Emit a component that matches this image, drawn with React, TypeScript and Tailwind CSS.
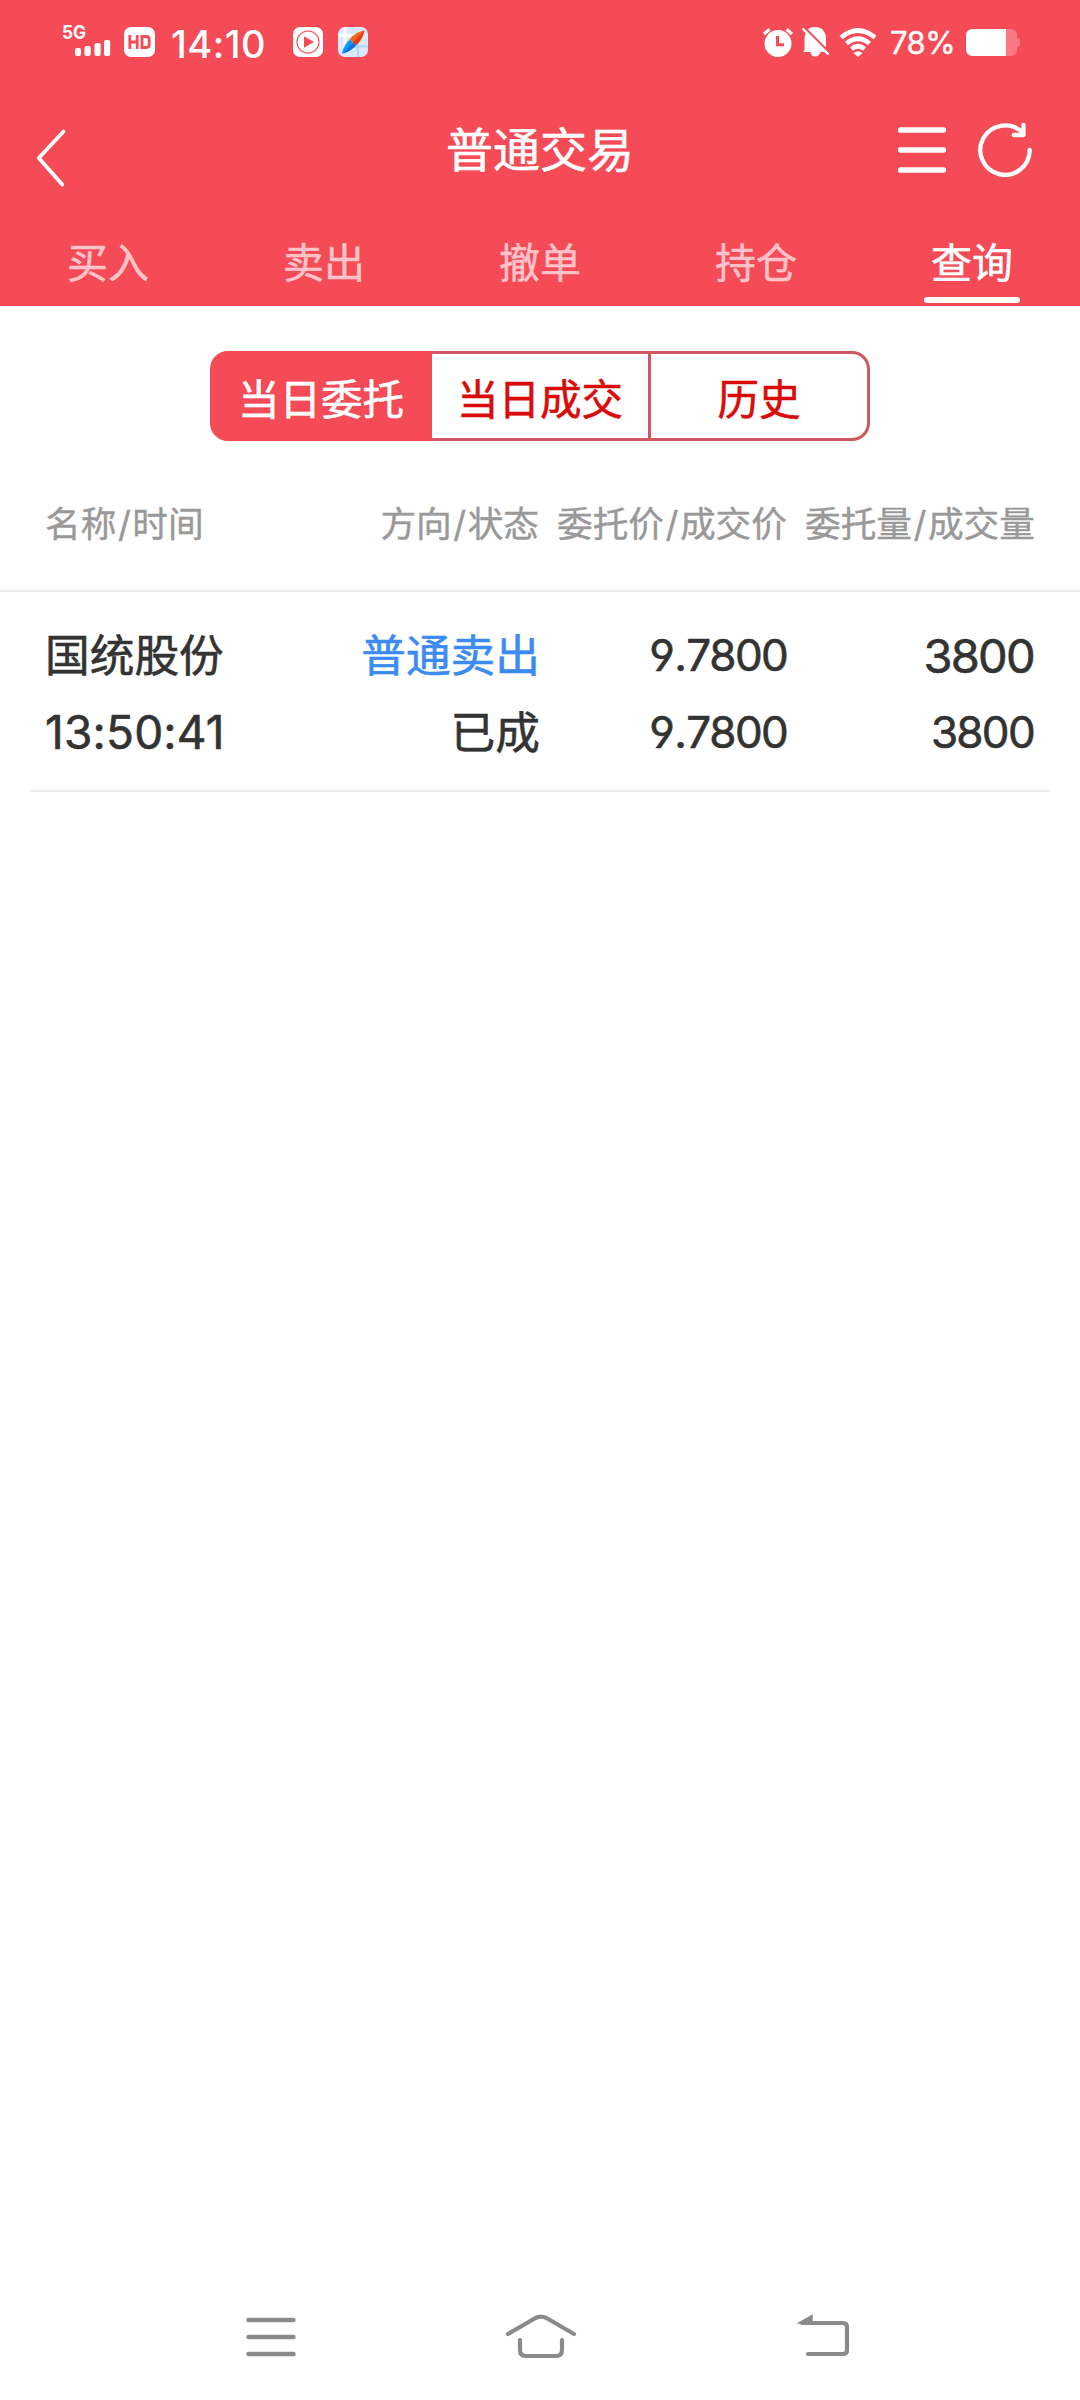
import React from "react";

const tabs = ["买入", "卖出", "撤单", "持仓", "查询"];

function StatusBar() {
  return (
    <div className="flex h-[84px] items-start justify-between pl-[60px] pr-[60px]">
      <div className="flex items-start">
        <svg className="mt-[20px] h-[40px] w-[56px]" viewBox="60 20 56 40" fill="#fff">
          <text x="62" y="39" fontSize="19" fontWeight="700" textLength="24" lengthAdjust="spacingAndGlyphs">5G</text>
          <rect x="75" y="48" width="6" height="8" rx="2" />
          <rect x="84.5" y="46" width="6.2" height="10" rx="2" />
          <rect x="94.5" y="43" width="6.2" height="13" rx="2" />
          <rect x="104" y="40" width="6.2" height="16" rx="2" />
        </svg>
        <div className="ml-[8px] mt-[27px] flex h-[30px] w-[31px] items-center justify-center rounded-[7px] bg-white">
          <svg className="h-[14px] w-[23px]" viewBox="0 0 23 14" fill="none" stroke="#f54b57" strokeWidth="2.8">
            <path d="M1.8 0v14M9.2 0v14M1.8 7h7.4M14 1.5h4.200q3 0 3 3v5q0 3-3 3H14z" />
          </svg>
        </div>
        <span className="ml-[16px] mt-[22px] w-[95px] whitespace-nowrap text-[38px] font-medium leading-[44px] tracking-[0.5px]">14:10</span>
        <svg className="ml-[27px] mt-[27px] h-[30px] w-[30px]" viewBox="0 0 30 30">
          <rect width="30" height="30" rx="7" fill="#fff" />
          <circle cx="15" cy="15" r="11" fill="none" stroke="#f54b57" strokeWidth="1.1" />
          <path d="M11 9.200v11.600L21 15z" fill="#f54b57" />
        </svg>
        <svg className="ml-[15px] mt-[27px] h-[30px] w-[30px]" viewBox="0 0 30 30">
          <defs><clipPath id="map"><rect width="30" height="30" rx="7" /></clipPath></defs>
          <g clipPath="url(#map)">
            <rect width="30" height="30" fill="#dbe8fa" />
            <path d="M7 0v22M0 8.500h21" stroke="#fff" strokeWidth="3" />
            <path d="M20 9v21M10 19.500h20" stroke="#a9d8f8" strokeWidth="2" />
            <path d="M26.500 3.500Q16 6 12 12.500L18 18.500Q25 12 26.500 3.500z" fill="#e23c10" />
            <path d="M26.500 3.500Q16 6 12 12.500l2.700 2.700z" fill="#f56a1d" />
            <path d="M4 26.500Q6 17 12 12.500l6 6Q12 25 4 26.500z" fill="#129bf5" />
            <path d="M4 26.500Q12 25 18 18.500l-2.800-2.800z" fill="#0874e8" />
          </g>
        </svg>
      </div>
      <div className="flex items-start">
        <svg className="mt-[26px] h-[32px] w-[32px]" viewBox="762 26 32 32">
          <circle cx="778" cy="43.500" r="13.500" fill="#fff" />
          <path d="M764 34l5.500-4.800M792 34l-5.500-4.800" stroke="#fff" strokeWidth="3.200" />
          <path d="M777.500 36v8.800h6.500" fill="none" stroke="#f54b57" strokeWidth="3" />
        </svg>
        <svg className="ml-[7px] mt-[26px] h-[32px] w-[30px]" viewBox="801 26 30 32">
          <path d="M804.500 49.500V40Q804.500 27 815 27T826 39v10.500l1.500 2.500h-7Q819 56.500 815 56.500T810.500 52H803z" fill="#fff" />
          <path d="M804 27l26 26" stroke="#f54b57" strokeWidth="2.200" />
          <path d="M802.500 28.500l26 26" stroke="#fff" strokeWidth="2.400" />
        </svg>
        <svg className="ml-[8px] mt-[26px] h-[32px] w-[38px]" viewBox="839 26 38 32" fill="none" stroke="#fff" strokeWidth="4.600">
          <path d="M841 37.500Q858 23.500 875 37.500M846.500 43.500Q858 34 869.500 43.500M851.500 49Q858 43.500 864.500 49" />
          <path d="M853.500 53Q858 49.500 862.500 53L858 57z" fill="#fff" stroke="none" />
        </svg>
        <span className="ml-[13px] mt-[23px] w-[67px] whitespace-nowrap text-[31px] leading-[40px] tracking-[-0.500px] [-webkit-text-stroke:0.4px]">78%</span>
        <svg className="ml-[9px] mt-[29px] h-[27px] w-[54px]" viewBox="0 0 54 27">
          <path d="M40 0h4q7 0 7 7v2q3 0 3 3v3q0 3-3 3v2q0 7-7 7h-4z" fill="#fa7984" />
          <path d="M7 0h33v27H7q-7 0-7-7V7q0-7 7-7z" fill="#fff" />
        </svg>
      </div>
    </div>
  );
}

function TitleBar() {
  return (
    <div className="grid h-[132px] grid-cols-[1fr_auto_1fr] items-start">
      <svg className="ml-[34px] mt-[44px] h-[62px] w-[36px]" viewBox="34 128 36 62" fill="none" stroke="#fff" strokeWidth="3.800" strokeLinecap="round" strokeLinejoin="round">
        <path d="M63.500 131.500L38.800 158L62.200 184.500" />
      </svg>
      <h1 className="mt-[31px] text-[47px] font-normal leading-[70px] [-webkit-text-stroke:0.6px]">普通交易</h1>
      <div className="mr-[46px] mt-[36px] flex justify-end gap-[28px]">
        <svg className="h-[60px] w-[52px]" viewBox="896 120 52 60" stroke="#fff" strokeWidth="5.300" strokeLinecap="round">
          <path d="M900.500 130h43M900.500 150h43M900.500 170h43" />
        </svg>
        <svg className="h-[60px] w-[58px]" viewBox="976 120 58 60" fill="none" stroke="#fff" strokeWidth="4.300" strokeLinecap="round" strokeLinejoin="round">
          <path d="M1029.700 150A24.700 24.700 0 1 1 1021.500 131.700" />
          <path d="M1023.500 125v10h-9.800" />
        </svg>
      </div>
    </div>
  );
}

export default function App() {
  return (
    <div className="flex h-[2400px] w-[1080px] flex-col bg-white font-['Inter','Noto_Sans_CJK_SC',sans-serif] text-[#333]">
      <header className="h-[306px] bg-[#f54b57] text-white">
        <StatusBar />
        <TitleBar />
        <nav className="grid h-[90px] grid-cols-5 [-webkit-text-stroke:0.5px]">
          {tabs.map((t) => (
            <div key={t} className={t === "查询" ? "flex flex-col items-center text-white" : "flex flex-col items-center text-[#ffc3c9]"}>
              <span className="mt-[17px] text-[41px] leading-[60px]">{t}</span>
              {t === "查询" && <i className="mt-[4px] h-[6px] w-[96px] rounded-full bg-white" />}
            </div>
          ))}
        </nav>
      </header>

      <div className="mx-auto mt-[45px] grid h-[90px] w-[660px] shrink-0 grid-cols-[222px_219px_219px] text-center text-[41.500px] leading-[80px] text-[#d90b0b] [-webkit-text-stroke:0.6px]">
        <div className="h-[90px] rounded-l-[18px] bg-[#f54b57] pt-[9px] text-white">当日委托</div>
        <div className="h-[90px] border-y-[3px] border-r-[3px] border-[#d0575f] pt-[6px]">当日成交</div>
        <div className="h-[90px] rounded-r-[18px] border-y-[3px] border-r-[3px] border-[#d0575f] pt-[6px]">历史</div>
      </div>

      <div className="mt-[39px] flex h-[112px] shrink-0 border-b-2 border-[#ebebeb] px-[45px] pt-[17px] text-[35.700px] leading-[54px] text-[#999] [-webkit-text-stroke:0.4px]">
        <div className="w-[200px]">名称<span className="mx-[1.500px]">/</span>时间</div>
        <div className="w-[294px] text-right">方向<span className="mx-[1.500px]">/</span>状态</div>
        <div className="w-[248px] text-right">委托价<span className="mx-[1.500px]">/</span>成交价</div>
        <div className="w-[248px] text-right">委托量<span className="mx-[1.500px]">/</span>成交量</div>
      </div>

      <div className="mx-[30px] flex h-[200px] shrink-0 border-b-2 border-[#ebebeb] px-[15px] pt-[26px] text-[44.700px] leading-[77px] [-webkit-text-stroke:0.6px]">
        <div className="w-[200px] whitespace-nowrap">
          <div>国统股份</div>
          <div className="-mt-px text-[46px] tracking-[0.2px]">13:50:41</div>
        </div>
        <div className="w-[295px] text-right">
          <div className="text-[#3b8bf2]">普通卖出</div>
          <div>已成</div>
        </div>
        <div className="-mt-px w-[247px] text-right text-[44px] tracking-[-1.700px] [font-feature-settings:'ss01','kern'_0]">
          <div>9<span className="mx-[1px]">.</span>7800</div>
          <div>9<span className="mx-[1px]">.</span>7800</div>
        </div>
        <div className="-mt-px w-[247px] text-right text-[44px] tracking-[-1.700px]">
          <div className="text-[47px]">3800</div>
          <div>3800</div>
        </div>
      </div>

      <footer className="mt-auto grid h-[100px] shrink-0 grid-cols-[260px_290px_56px] items-start pl-[244px] pt-[10px]">
        <svg className="h-[54px] w-[54px]" viewBox="244 2310 54 54" stroke="#8a8a8a" strokeWidth="4.400" strokeLinecap="round">
          <path d="M248.500 2320h45M248.500 2337h45M248.500 2354h45" />
        </svg>
        <svg className="h-[54px] w-[74px]" viewBox="504 2310 74 54" fill="none" stroke="#8a8a8a" strokeWidth="4.200" strokeLinecap="round">
          <path d="M508 2334L535.500 2318Q541 2315.500 546.500 2318L574 2334M520 2340V2350Q520 2356 526 2356H556Q562 2356 562 2350V2340" />
        </svg>
        <svg className="h-[54px] w-[56px]" viewBox="794 2310 56 54" fill="none" stroke="#8a8a8a" strokeWidth="4.200" strokeLinecap="round">
          <path d="M802 2323H843Q847 2323 847 2327V2350Q847 2354 843 2354H808" />
          <path d="M799 2323L812 2315.500V2323z" fill="#8a8a8a" strokeWidth="1.500" />
        </svg>
      </footer>
    </div>
  );
}
